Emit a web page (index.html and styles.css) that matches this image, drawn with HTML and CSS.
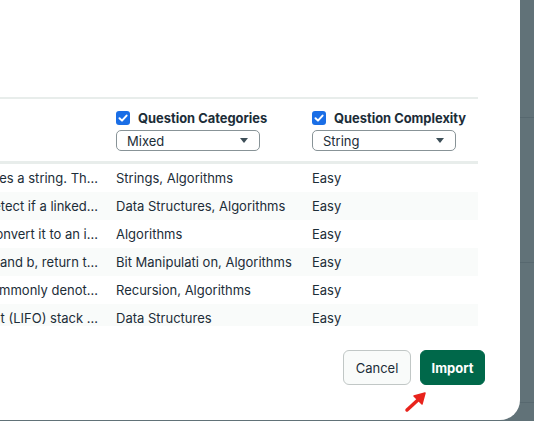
FILE: index.html
```html
<!DOCTYPE html>
<html>
<head>
<meta charset="utf-8">
<link rel="stylesheet" href="styles.css">
</head>
<body>
<div class="modal">
  <div class="table-wrap">
    <table class="grid">
      <colgroup><col class="c1"><col class="c2"><col class="c3"></colgroup>
      <thead>
        <tr>
          <th></th>
          <th>
            <div class="hd"><span class="cb"><svg viewBox="0 0 14 14" width="14" height="14"><path d="M3.5 7.2 L6 9.6 L10.6 4.6" fill="none" stroke="#fff" stroke-width="2" stroke-linecap="round" stroke-linejoin="round"/></svg></span><span class="hl">Question Categories</span></div>
            <div class="sel"><span>Mixed</span><span class="caret"></span></div>
          </th>
          <th>
            <div class="hd"><span class="cb"><svg viewBox="0 0 14 14" width="14" height="14"><path d="M3.5 7.2 L6 9.6 L10.6 4.6" fill="none" stroke="#fff" stroke-width="2" stroke-linecap="round" stroke-linejoin="round"/></svg></span><span class="hl">Question Complexity</span></div>
            <div class="sel"><span>String</span><span class="caret"></span></div>
          </th>
        </tr>
      </thead>
      <tbody>
        <tr><td><div class="desc"><span>Write a function that reverses a string. Th…</span></div></td><td>Strings, Algorithms</td><td>Easy</td></tr>
        <tr><td><div class="desc"><span>Write a function to detect if a linked…</span></div></td><td>Data Structures, Algorithms</td><td>Easy</td></tr>
        <tr><td><div class="desc"><span>Given a roman numeral, convert it to an i…</span></div></td><td>Algorithms</td><td>Easy</td></tr>
        <tr><td><div class="desc"><span>Given two integers a and b, return t…</span></div></td><td>Bit Manipulati on, Algorithms</td><td>Easy</td></tr>
        <tr><td><div class="desc"><span>The Fibonacci numbers, commonly denot…</span></div></td><td>Recursion, Algorithms</td><td>Easy</td></tr>
        <tr><td><div class="desc"><span>Implement a last-in-first-out (LIFO) stack …</span></div></td><td>Data Structures</td><td>Easy</td></tr>
      </tbody>
    </table>
  </div>
  <div class="footer">
    <button class="btn cancel">Cancel</button>
    <button class="btn import">Import</button>
  </div>
  <svg class="arrow" width="26" height="24" viewBox="0 0 26 24"><path d="M4 20 L16 9" stroke="#e8231c" stroke-width="3.5" stroke-linecap="round"/><path d="M11 6 L22 3 L19 14 Z" fill="#e8231c" stroke="#e8231c" stroke-width="1.5" stroke-linejoin="round"/></svg>
</div>
</body>
</html>
```
FILE: styles.css
```css
html, body {
  margin: 0;
  height: 100%;
  overflow: hidden;
}
body {
  background:
    linear-gradient(#57686f, #57686f) 0 117px / 100% 1px no-repeat,
    linear-gradient(#57686f, #57686f) 0 262px / 100% 1px no-repeat,
    linear-gradient(#57686f, #57686f) 0 402px / 100% 1px no-repeat,
    #617278;
  font-family: Inter, Lato, sans-serif;
  color: #1c2d38;
}
.modal {
  position: relative;
  margin-left: -140px;
  width: 660px;
  height: 420px;
  box-sizing: border-box;
  padding-top: 97px;
  background: #fff;
  border-bottom-right-radius: 20px;
}
.table-wrap {
  width: 618px;
  height: 229px;
  overflow: hidden;
}
.grid {
  width: 618px;
  table-layout: fixed;
  border-collapse: separate;
  border-spacing: 0;
}
.c1 { width: 248px; }
.c2 { width: 196px; }
.c3 { width: 174px; }
.grid th {
  text-align: left;
  vertical-align: top;
  padding: 12px 8px 10px;
  height: 40px;
  border-top: 2px solid #e8edeb;
  border-bottom: 3px solid #e8edeb;
}
.hd {
  display: flex;
  align-items: center;
  gap: 8px;
  height: 14px;
}
.cb {
  width: 14px;
  height: 14px;
  border-radius: 3px;
  background: #1a6ee6;
  display: flex;
}
.hl {
  font-size: 12.9px;
  font-weight: 700;
  color: #1c2d38;
  white-space: nowrap;
}
.sel {
  margin-top: 5px;
  width: 144px;
  height: 21px;
  box-sizing: border-box;
  border: 1px solid #889397;
  border-radius: 5px;
  display: flex;
  align-items: center;
  justify-content: space-between;
  padding: 0 11px 0 10px;
  font-size: 13px;
  font-weight: 400;
  color: #1c2d38;
}
.caret {
  width: 0;
  height: 0;
  border-left: 4px solid transparent;
  border-right: 4px solid transparent;
  border-top: 5px solid #3d4f58;
}
.grid td {
  height: 28px;
  line-height: 28px;
  padding: 0 8px;
  font-size: 13px;
  white-space: nowrap;
  overflow: hidden;
  text-overflow: ellipsis;
  color: #1c2d38;
}
.grid td:first-child {
  padding-right: 10px;
}
.desc {
  display: flex;
  justify-content: flex-end;
  overflow: hidden;
}
.desc span {
  flex: none;
  white-space: nowrap;
}
.grid tbody tr:nth-child(even) td {
  background: #f9fbfa;
}
.footer {
  display: flex;
  justify-content: flex-end;
  gap: 9px;
  padding: 24px 35px 0 0;
}
.btn {
  height: 35px;
  border-radius: 6px;
  font-family: Inter, Lato, sans-serif;
  font-size: 13px;
  padding: 0;
  cursor: pointer;
}
.cancel {
  width: 68px;
  background: #f9fbfa;
  border: 1px solid #c1c7c6;
  color: #1c2d38;
}
.import {
  width: 65px;
  background: #00684a;
  border: 1px solid #00684a;
  color: #fff;
  font-weight: 700;
}
.arrow {
  position: absolute;
  left: 543px;
  top: 390px;
}
```
